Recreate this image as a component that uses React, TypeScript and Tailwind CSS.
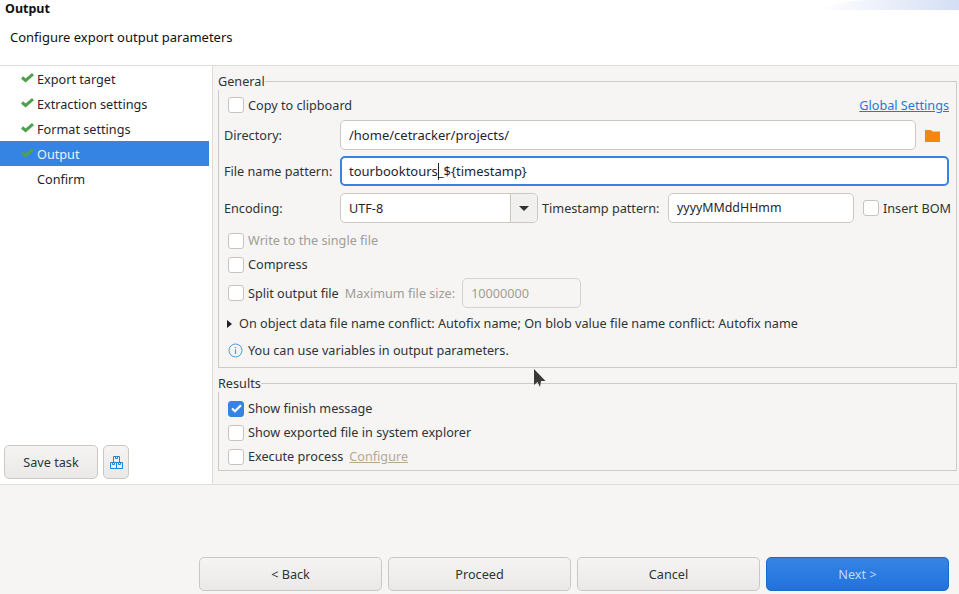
import React from "react";

const Tick = () => (
  <svg width="13" height="10" viewBox="0 0 13 10" className="-mt-[2px] shrink-0">
    <path d="M1 4.5 L4.6 7.5 L12 1.2" fill="none" stroke="#4fa04f" strokeWidth="3" />
  </svg>
);

function NavRow({ label, done, active }: { label: string; done?: boolean; active?: boolean }) {
  return (
    <div className={`flex h-[25px] items-center pl-[21px] ${active ? "bg-[#3584e4] text-[#e8f0fb]" : "text-[#241f31]"}`}>
      <span className="flex w-[16px] shrink-0">{done && <Tick />}</span>
      <span>{label}</span>
    </div>
  );
}

function Check({ checked, label, disabled, className = "" }: { checked?: boolean; label: string; disabled?: boolean; className?: string }) {
  return (
    <div className={`flex items-center gap-1 ${className}`}>
      <span
        className={`flex h-4 w-4 shrink-0 items-center justify-center rounded-[3px] border ${
          checked ? "border-[#3584e4] bg-[#3584e4]" : "border-[#c8c3bc] bg-white"
        }`}
      >
        {checked && (
          <svg width="11" height="9" viewBox="0 0 11 9">
            <path d="M1 4.5 L4 7.2 L10 1.2" fill="none" stroke="#fff" strokeWidth="2.2" />
          </svg>
        )}
      </span>
      <span className={`-mt-px whitespace-nowrap ${disabled ? "text-[#a09c96]" : "text-[#2e3436]"}`}>{label}</span>
    </div>
  );
}

function Btn({ label, primary }: { label: string; primary?: boolean }) {
  return (
    <div
      className={`flex h-[34px] w-[183px] items-center justify-center rounded-[5px] border ${
        primary
          ? "border-[#1b6acb] bg-gradient-to-b from-[#3584e4] to-[#2272de] text-[#c3d8f4]"
          : "border-[#cdc7c2] bg-gradient-to-b from-[#f5f4f2] to-[#ebe9e7] text-[#2e3436]"
      }`}
    >
      {label}
    </div>
  );
}

export default function App() {
  return (
    <div
      className="flex h-[594px] w-[959px] flex-col overflow-hidden bg-[#f6f5f4] text-[12.67px] leading-[18px] text-[#2e3436]"
      style={{ fontFamily: '"Noto Sans", sans-serif' }}
    >
      <header className="relative h-[66px] shrink-0 border-b border-[#dedcd9] bg-white text-[#111]">
        <svg className="absolute right-0 top-0" width="140" height="10" viewBox="0 0 140 10">
          <defs>
            <linearGradient id="g" x1="0" x2="1" y1="0" y2="0">
              <stop offset="0" stopColor="#ffffff" />
              <stop offset="1" stopColor="#d5def5" />
            </linearGradient>
          </defs>
          <path d="M0 10 C12 5 30 0 50 0 H140 V10 Z" fill="url(#g)" />
        </svg>
        <div className="pl-[5px] pt-0 text-[12.5px] font-bold">Output</div>
        <div className="pl-[10px] pt-[10px] text-[13px]">Configure export output parameters</div>
      </header>

      <main className="flex h-[419px] shrink-0 border-b border-[#dedcd9]">
        <aside className="flex w-[213px] shrink-0 flex-col border-r border-[#dedcd9] bg-white pr-[3px]">
          <NavRow label="Export target" done />
          <NavRow label="Extraction settings" done />
          <NavRow label="Format settings" done />
          <NavRow label="Output" done active />
          <NavRow label="Confirm" />
          <div className="mt-auto mb-[5px] flex gap-[5px] pl-1">
            <div className="flex h-[34px] w-[94px] items-center justify-center rounded-[5px] border border-[#cdc7c2] bg-gradient-to-b from-[#f5f4f2] to-[#ebe9e7]">
              Save task
            </div>
            <div className="flex h-[34px] w-[26px] items-center justify-center rounded-[5px] border border-[#cdc7c2] bg-gradient-to-b from-[#f5f4f2] to-[#ebe9e7]">
              <svg width="13" height="13" viewBox="0 0 13 13" fill="none" stroke="#1c86d8" strokeWidth="1">
                <path d="M3.5 .5 H9.5 V6.5 H3.5 Z M5.5 .5 V2.5 H7.5 V.5" />
                <path d="M.5 6.5 H6.5 V12.5 H.5 Z M2.5 6.5 V8.5 H4.5 V6.5" />
                <path d="M6.5 6.5 H12.5 V12.5 H6.5 Z M8.5 6.5 V8.5 H10.5 V6.5" />
              </svg>
            </div>
          </div>
        </aside>

        <section className="flex min-w-0 flex-1 flex-col pl-[5px] pr-[1px] pt-[6px]">
          <fieldset className="mr-px h-[296px] border border-[#cdc9c3]">
            <legend className="-ml-px text-[#2e3436]">General</legend>
            <div className="relative flex h-[22px] items-center pl-[9px] pt-[8px]">
              <Check label="Copy to clipboard" />
              <a className="ml-auto mr-[7px] text-[#2a76d6] underline">Global Settings</a>
            </div>
            <div className="mt-[8px] flex h-[30px] items-center pl-[5px]">
              <span className="w-[116px] shrink-0">Directory:</span>
              <div className="flex h-[30px] w-[576px] items-center rounded-[5px] border border-[#cdc7c2] bg-white pl-2 text-[13px] text-[#241f31]">
                /home/cetracker/projects/
              </div>
              <svg className="ml-[9px]" width="15" height="13" viewBox="0 0 15 13">
                <path d="M0 1 H6 L7.5 2.5 H15 V13 H0 Z" fill="#f5870f" />
              </svg>
            </div>
            <div className="mt-[6px] flex h-[30px] items-center pl-[5px]">
              <span className="w-[116px] shrink-0 whitespace-nowrap">File name pattern:</span>
              <div className="flex h-[30px] w-[609px] shrink-0 items-center rounded-[5px] border-2 border-[#3584e4] bg-white pl-[7px] text-[13px] text-[#241f31]">
                <span>tourbooktours</span>
                <span className="h-[17px] w-px bg-[#241f31]" />
                <span className="-ml-px">_$&#123;timestamp&#125;</span>
              </div>
            </div>
            <div className="mt-[7px] flex h-[30px] items-center pl-[5px]">
              <span className="w-[116px] shrink-0">Encoding:</span>
              <div className="flex h-[30px] w-[198px] items-center rounded-[5px] border border-[#cdc7c2] bg-white">
                <span className="flex-1 pl-2 text-[#241f31]">UTF-8</span>
                <span className="flex h-full w-[27px] items-center justify-center rounded-r-[5px] border-l border-[#cdc7c2] bg-[#f1f0ee]">
                  <svg width="10" height="5" viewBox="0 0 10 5"><path d="M0 0 H10 L5 5 Z" fill="#2e3436" /></svg>
                </span>
              </div>
              <span className="ml-1 w-[126px] shrink-0 whitespace-nowrap">Timestamp pattern:</span>
              <div className="flex h-[30px] w-[186px] items-center rounded-[5px] border border-[#cdc7c2] bg-white pl-2 text-[12.4px] text-[#241f31]">
                yyyyMMddHHmm
              </div>
              <Check className="ml-[9px]" label="Insert BOM" />
            </div>
            <div className="mt-[9px] pl-[9px]">
              <Check disabled label="Write to the single file" />
            </div>
            <div className="mt-[7px] pl-[9px]">
              <Check label="Compress" />
            </div>
            <div className="mt-[5px] flex h-[30px] items-center pl-[9px]">
              <Check label="Split output file" />
              <span className="ml-[6px] -mt-px whitespace-nowrap text-[#a09c96]">Maximum file size:</span>
              <div className="ml-[7px] flex h-[30px] w-[119px] items-center rounded-[5px] border border-[#d5d1cc] pl-[8px] text-[#a09c96]">
                10000000
              </div>
            </div>
            <div className="mt-[7px] flex items-center pl-[8px]">
              <svg width="5" height="8" viewBox="0 0 5 8"><path d="M0 0 L5 4 L0 8 Z" fill="#222" /></svg>
              <span className="ml-[7px] -mt-px whitespace-nowrap">
                On object data file name conflict: Autofix name; On blob value file name conflict: Autofix name
              </span>
            </div>
            <div className="mt-[9px] flex items-center gap-[5px] pl-[9px]">
              <svg width="15" height="15" viewBox="0 0 15 15" fill="none" className="shrink-0">
                <circle cx="7.5" cy="7.5" r="6.5" stroke="#4a9ed8" />
                <path d="M7.5 6.5 V11 M7.5 4 V5.3" stroke="#4a9ed8" strokeWidth="1.2" />
              </svg>
              <span>You can use variables in output parameters.</span>
            </div>
          </fieldset>

          <fieldset className="mr-px mt-[6px] h-[97px] border border-[#cdc9c3]">
            <legend className="-ml-px text-[#2e3436]">Results</legend>
            <div className="flex flex-col gap-[7px] pl-[9px] pt-[8px]">
              <Check checked label="Show finish message" />
              <Check label="Show exported file in system explorer" />
              <div className="flex items-center">
                <Check label="Execute process" />
                <a className="ml-[6px] -mt-px text-[#b9a98c] underline">Configure</a>
              </div>
            </div>
          </fieldset>

          <svg className="pointer-events-none absolute left-[534px] top-[369px]" width="12" height="20" viewBox="0 0 12 20">
            <path d="M0 0 V16 L3.5 13 L6 18 L7 12 H11.5 Z" fill="#3a3a3a" />
          </svg>
        </section>
      </main>

      <footer className="flex flex-1 items-end justify-end gap-[6px] pb-[3px] pr-[10px]">
        <Btn label="< Back" />
        <Btn label="Proceed" />
        <Btn label="Cancel" />
        <Btn label="Next >" primary />
      </footer>
    </div>
  );
}
